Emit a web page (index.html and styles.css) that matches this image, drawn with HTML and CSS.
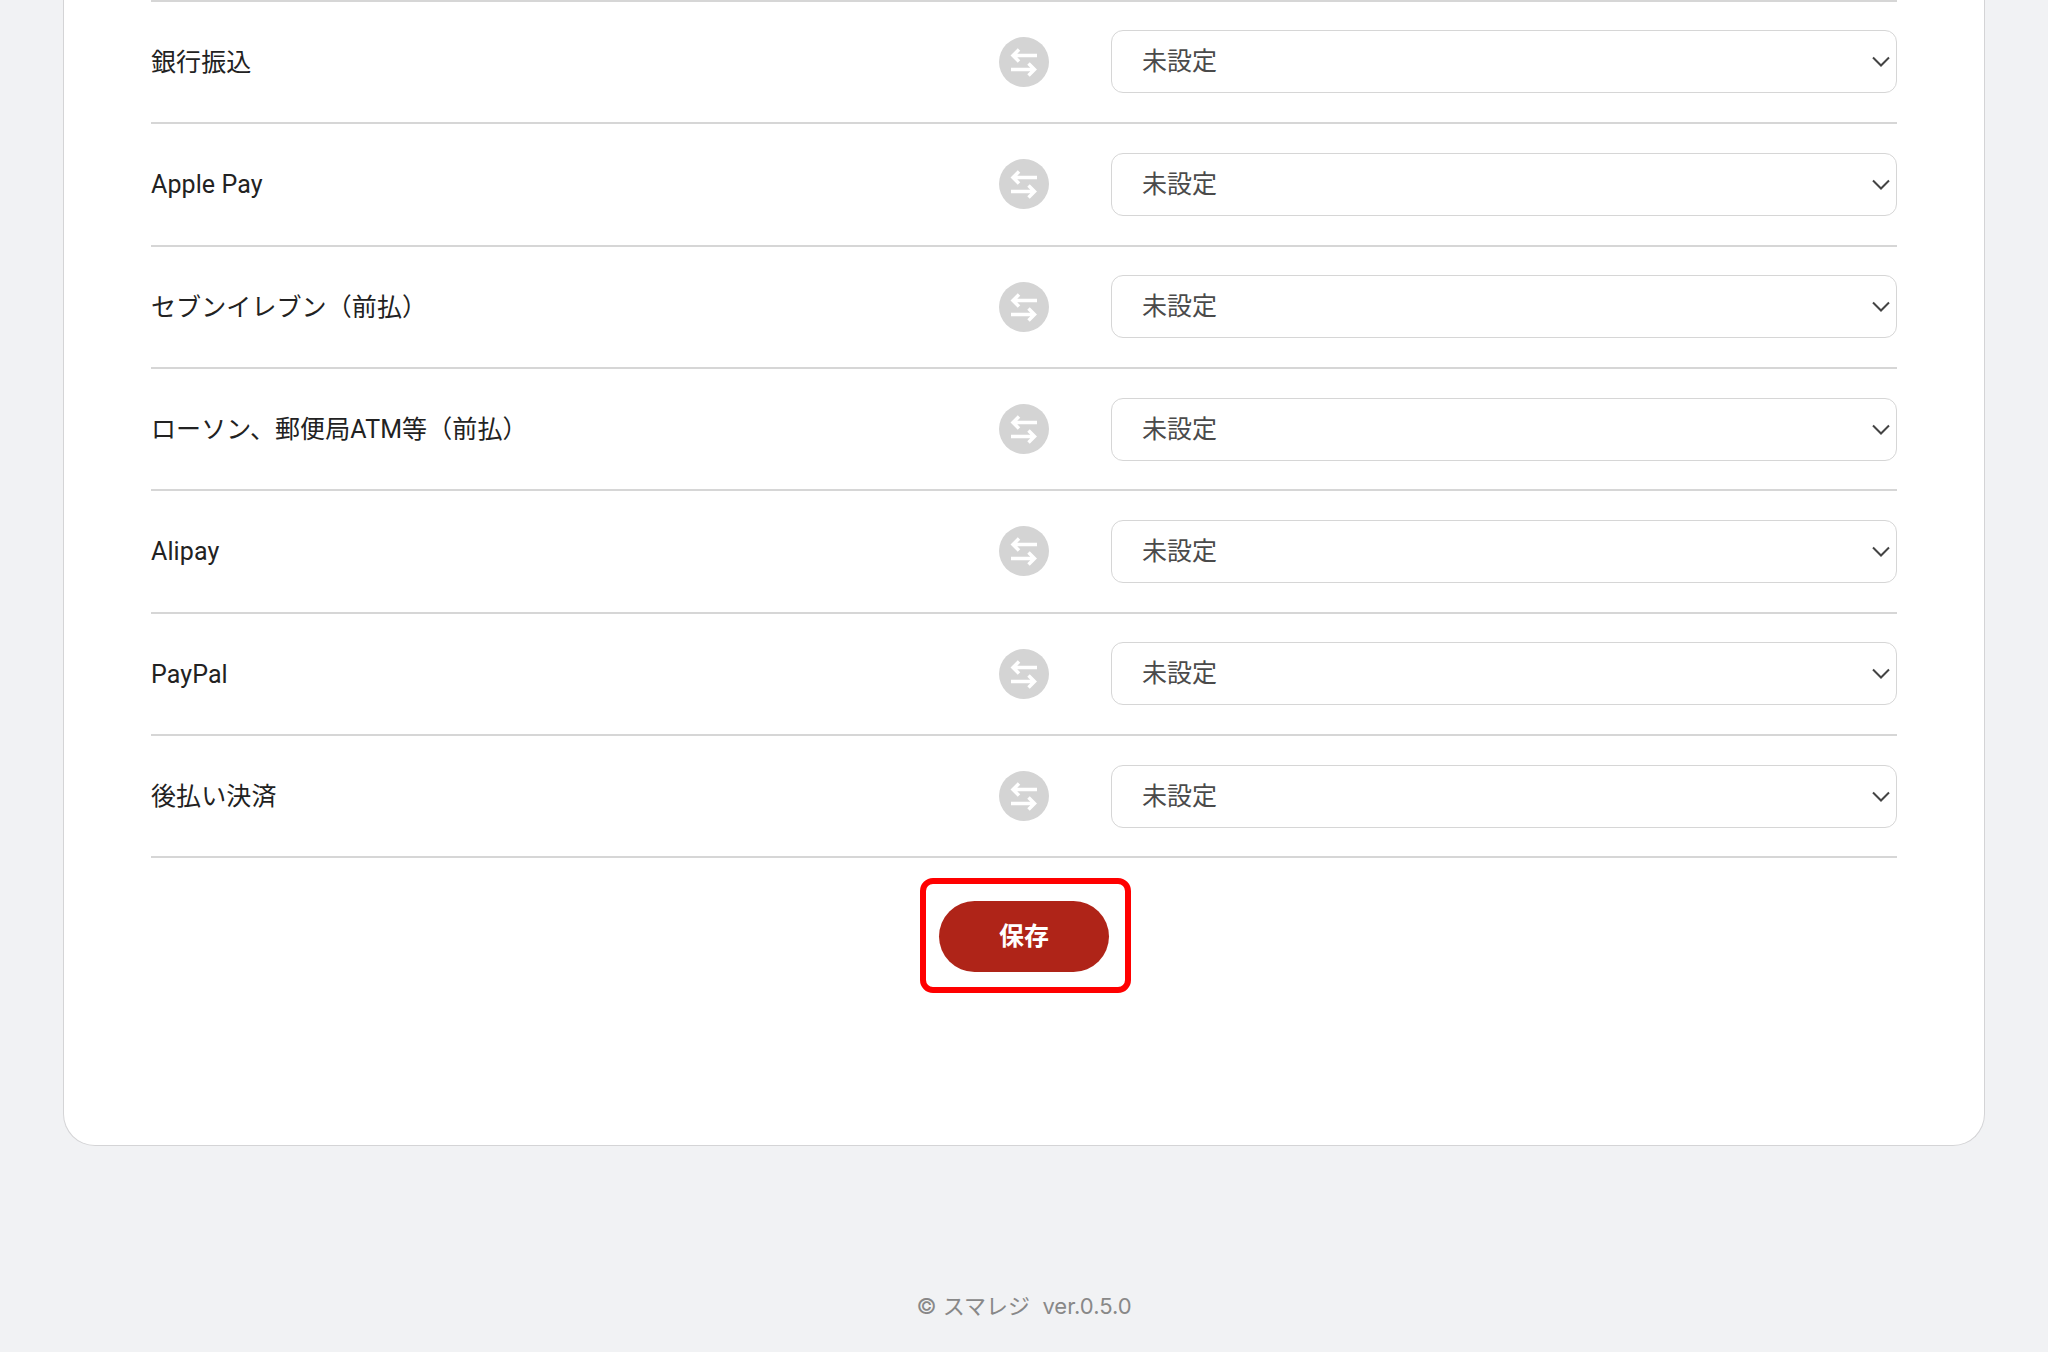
FILE: index.html
```html
<!DOCTYPE html>
<html lang="ja">
<head>
    <meta charset="UTF-8">
    <meta name="viewport" content="width=device-width, initial-scale=1.0">
    <title>決済方法の設定</title>
    <link rel="stylesheet" href="styles.css">
</head>
<body>
    <main class="card">
        <form class="mapping-form">
            <div class="mapping-row">
                <span class="mapping-label">銀行振込</span>
                <span class="swap-icon"><svg viewBox="0 0 50 50"><path d="M38 18.5H15M20 12.5l-6 6 6 6M12 32.5h23M29.500 26.500l6 6-6 6"/></svg></span>
                <div class="select-wrap">
                    <select class="mapping-select"><option>未設定</option></select>
                    <svg class="chevron" viewBox="0 0 18 11"><path d="M1 1.500l8 8 8-8"/></svg>
                </div>
            </div>
            <div class="mapping-row">
                <span class="mapping-label">Apple Pay</span>
                <span class="swap-icon"><svg viewBox="0 0 50 50"><path d="M38 18.5H15M20 12.5l-6 6 6 6M12 32.5h23M29.500 26.500l6 6-6 6"/></svg></span>
                <div class="select-wrap">
                    <select class="mapping-select"><option>未設定</option></select>
                    <svg class="chevron" viewBox="0 0 18 11"><path d="M1 1.500l8 8 8-8"/></svg>
                </div>
            </div>
            <div class="mapping-row">
                <span class="mapping-label">セブンイレブン（前払）</span>
                <span class="swap-icon"><svg viewBox="0 0 50 50"><path d="M38 18.5H15M20 12.5l-6 6 6 6M12 32.5h23M29.500 26.500l6 6-6 6"/></svg></span>
                <div class="select-wrap">
                    <select class="mapping-select"><option>未設定</option></select>
                    <svg class="chevron" viewBox="0 0 18 11"><path d="M1 1.500l8 8 8-8"/></svg>
                </div>
            </div>
            <div class="mapping-row">
                <span class="mapping-label">ローソン、郵便局ATM等（前払）</span>
                <span class="swap-icon"><svg viewBox="0 0 50 50"><path d="M38 18.5H15M20 12.5l-6 6 6 6M12 32.5h23M29.500 26.500l6 6-6 6"/></svg></span>
                <div class="select-wrap">
                    <select class="mapping-select"><option>未設定</option></select>
                    <svg class="chevron" viewBox="0 0 18 11"><path d="M1 1.500l8 8 8-8"/></svg>
                </div>
            </div>
            <div class="mapping-row">
                <span class="mapping-label">Alipay</span>
                <span class="swap-icon"><svg viewBox="0 0 50 50"><path d="M38 18.5H15M20 12.5l-6 6 6 6M12 32.5h23M29.500 26.500l6 6-6 6"/></svg></span>
                <div class="select-wrap">
                    <select class="mapping-select"><option>未設定</option></select>
                    <svg class="chevron" viewBox="0 0 18 11"><path d="M1 1.500l8 8 8-8"/></svg>
                </div>
            </div>
            <div class="mapping-row">
                <span class="mapping-label">PayPal</span>
                <span class="swap-icon"><svg viewBox="0 0 50 50"><path d="M38 18.5H15M20 12.5l-6 6 6 6M12 32.5h23M29.500 26.500l6 6-6 6"/></svg></span>
                <div class="select-wrap">
                    <select class="mapping-select"><option>未設定</option></select>
                    <svg class="chevron" viewBox="0 0 18 11"><path d="M1 1.500l8 8 8-8"/></svg>
                </div>
            </div>
            <div class="mapping-row">
                <span class="mapping-label">後払い決済</span>
                <span class="swap-icon"><svg viewBox="0 0 50 50"><path d="M38 18.5H15M20 12.5l-6 6 6 6M12 32.5h23M29.500 26.500l6 6-6 6"/></svg></span>
                <div class="select-wrap">
                    <select class="mapping-select"><option>未設定</option></select>
                    <svg class="chevron" viewBox="0 0 18 11"><path d="M1 1.500l8 8 8-8"/></svg>
                </div>
            </div>
            <div class="form-actions">
                <div class="highlight-box">
                    <button type="button" class="save-button">保存</button>
                </div>
            </div>
        </form>
    </main>
    <footer class="page-footer">© スマレジ&nbsp;&nbsp;ver.0.5.0</footer>
</body>
</html>
```

FILE: styles.css
```css
body {
    font-family: Roboto, "Noto Sans CJK JP", sans-serif;
    background-color: #f1f2f4;
    margin: 0;
    height: 1352px;
    overflow: hidden;
}

.card {
    box-sizing: border-box;
    height: 1146px;
    margin: 0 63px;
    padding: 0 87px;
    background-color: #fff;
    border: 1px solid #d4d4d6;
    border-top: none;
    border-radius: 0 0 32px 32px;
}

.mapping-form {
    border-top: 2px solid #d6d6d6;
}

.mapping-row {
    box-sizing: border-box;
    height: 122.33px;
    display: flex;
    align-items: center;
    border-bottom: 2px solid #d6d6d6;
}

.mapping-label {
    flex: 0 0 848px;
    padding-top: 1px;
    font-size: 25px;
    line-height: 1.5;
    letter-spacing: 0.1px;
    color: #222;
}

.swap-icon {
    flex: 0 0 50px;
    height: 50px;
    border-radius: 50%;
    background-color: #d4d4d4;
}

.swap-icon svg {
    display: block;
    width: 50px;
    height: 50px;
}

.swap-icon path {
    fill: none;
    stroke: #fff;
    stroke-width: 3.5;
}

.select-wrap {
    position: relative;
    margin-left: 62px;
    flex: 1;
}

/* first select sits a pixel higher than the rest */
.mapping-row:first-child .select-wrap {
    margin-bottom: 2px;
}

.mapping-select {
    display: block;
    box-sizing: border-box;
    width: 100%;
    height: 63px;
    padding: 0 30px;
    font-family: inherit;
    font-size: 25px;
    color: #4a4a4a;
    background-color: #fff;
    border: 1.5px solid #d6d6d6;
    border-radius: 12px;
    appearance: none;
}

.chevron {
    position: absolute;
    right: 7px;
    top: 26px;
    width: 18px;
    height: 11px;
}

.chevron path {
    fill: none;
    stroke: #444;
    stroke-width: 2;
}

.form-actions {
    display: flex;
    justify-content: center;
    padding-top: 20px;
}

.highlight-box {
    display: flex;
    margin-left: 3px;
    padding: 17px 16px 15px 13px;
    border: 6px solid #f00;
    border-radius: 13px;
}

.save-button {
    width: 170px;
    height: 71px;
    padding: 0;
    font-family: inherit;
    font-size: 25px;
    line-height: 1.5;
    font-weight: bold;
    color: #fff;
    background-color: #af2418;
    border: none;
    border-radius: 36px;
}

.page-footer {
    margin-top: 144px;
    text-align: center;
    font-family: Inter, "Noto Sans CJK JP", sans-serif;
    font-size: 22px;
    line-height: 1.5;
    color: #888;
}
```
